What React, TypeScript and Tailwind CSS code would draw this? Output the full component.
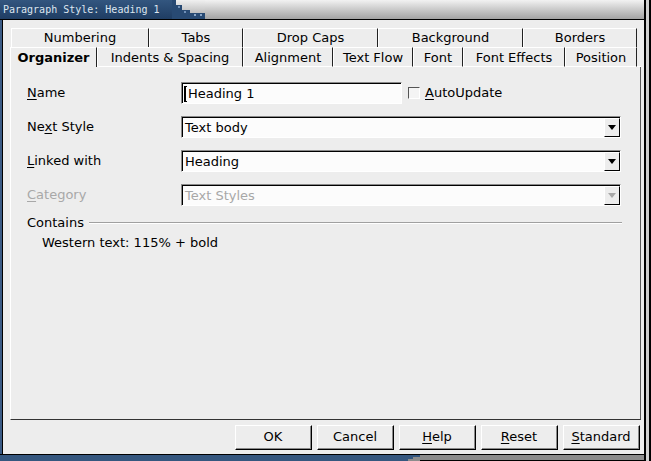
import React from 'react';

const backTabs = [
  { label: 'Numbering', w: 'w-[138px]' },
  { label: 'Tabs', w: 'w-[94px]' },
  { label: 'Drop Caps', w: 'w-[135px]' },
  { label: 'Background', w: 'w-[145px]' },
  { label: 'Borders', w: 'w-[114px]' },
];

const frontTabs = [
  { label: 'Organizer', w: 'w-[87px]', active: true },
  { label: 'Indents & Spacing', w: 'w-[146px]' },
  { label: 'Alignment', w: 'w-[90px]' },
  { label: 'Text Flow', w: 'w-[80px]' },
  { label: 'Font', w: 'w-[50px]' },
  { label: 'Font Effects', w: 'w-[102px]' },
  { label: 'Position', w: 'w-[72px]' },
];

const U = ({ children }: { children: React.ReactNode }) => (
  <span className="underline decoration-1 underline-offset-[2px]">{children}</span>
);

const Arrow = ({ disabled }: { disabled?: boolean }) => (
  <svg width="8" height="5" viewBox="0 0 8 5">
    <polygon points="0,0 8,0 4,5" fill={disabled ? '#a8a8a8' : '#000'} />
  </svg>
);

// sunken field, motif style
const Sunken = ({ className, children }: { className: string; children: React.ReactNode }) => (
  <div className={`${className} h-[22px] flex border border-t-[#8a8a8a] border-l-[#8a8a8a] border-b-white border-r-white`}>
    <div className="flex-1 flex items-stretch border-t border-l border-t-black border-l-black bg-[#fcfcfc]">
      {children}
    </div>
  </div>
);

const Combo = ({ value, disabled }: { value: string; disabled?: boolean }) => (
  <Sunken className="w-[440px]">
    <div className={`flex-1 flex items-center pl-[2px] ${disabled ? 'text-[#a8a8a8]' : 'text-black'}`}>{value}</div>
    <div className="w-[16px] flex items-center justify-center bg-[#ededed] border-t border-l border-t-white border-l-white border-b border-r border-b-black border-r-black">
      <Arrow disabled={disabled} />
    </div>
  </Sunken>
);

const Btn = ({ children }: { children: React.ReactNode }) => (
  <div className="w-[77px] h-[25px] flex border-t border-l border-t-white border-l-white border-b border-r border-b-black border-r-black">
    <div className="flex-1 flex items-center justify-center border-b border-r border-b-[#8a8a8a] border-r-[#8a8a8a] bg-[#ededed]">
      {children}
    </div>
  </div>
);

const App: React.FC = () => {
  return (
    <div
      className="w-[651px] h-[461px] flex bg-[#ededed] text-[13px] text-black overflow-hidden"
      style={{ fontFamily: '"DejaVu Sans", "Liberation Sans", sans-serif' }}
    >
      <div className="w-[644px] flex flex-col">
        {/* Title bar */}
        <div className="h-[19px] flex">
          <div
            className="w-[172px] flex items-center pl-[3px] bg-gradient-to-b from-[#33567f] to-[#1f3d63] text-[#dde6f0] text-[10px]"
            style={{ fontFamily: '"DejaVu Sans Mono", "Liberation Mono", monospace' }}
          >
            Paragraph Style: Heading 1
          </div>
          <svg width="33" height="19" viewBox="0 0 33 19" className="bg-gradient-to-b from-[#f0f0f0] to-[#a8a8a8]">
            <polygon points="0,0 4,0 4,5 10,5 10,10 18,10 18,13 33,13 33,19 0,19" fill="#284a73" />
            <rect x="6" y="6" width="2" height="2" fill="#6f90b8" />
            <rect x="12" y="11" width="2" height="2" fill="#6f90b8" />
            <rect x="22" y="14" width="2" height="2" fill="#8aa6c8" />
            <rect x="28" y="14" width="2" height="2" fill="#8aa6c8" />
          </svg>
          <div className="flex-1 bg-gradient-to-b from-[#f2f2f2] to-[#a3a3a3]" />
        </div>
        <div className="h-px bg-black" />

        {/* Window body */}
        <div className="flex-1 flex">
          <div className="w-[2px] bg-[#3b5b85]" />
          <div className="w-px bg-black" />
          <div className="flex-1 flex flex-col pt-[8px] pl-[7px] pr-[3px] pb-[4px]">
            {/* Tabs */}
            <div className="h-[19px] flex ml-px">
              {backTabs.map((t) => (
                <div
                  key={t.label}
                  className={`${t.w} flex items-center justify-center border-t border-l border-t-white border-l-white border-r border-r-[#222]`}
                >
                  {t.label}
                </div>
              ))}
            </div>
            <div className="h-[20px] flex">
              {frontTabs.map((t) =>
                t.active ? (
                  <div
                    key={t.label}
                    className={`${t.w} flex items-center justify-center pt-px font-bold border-t border-l border-t-white border-l-white border-r border-r-[#222]`}
                  >
                    {t.label}
                  </div>
                ) : (
                  <div
                    key={t.label}
                    className={`${t.w} flex items-center justify-center pt-px border-t border-l border-b border-t-white border-l-white border-b-white border-r border-r-[#222]`}
                  >
                    {t.label}
                  </div>
                )
              )}
              <div className="flex-1 border-b border-b-white" />
            </div>

            {/* Panel */}
            <div className="flex-1 flex flex-col border-l border-l-white border-r border-r-[#5a5a5a] border-b border-b-[#333] pl-[16px] pr-[18px] pt-[15px]">
              <div className="flex flex-col gap-[12px]">
                <div className="flex items-center h-[22px]">
                  <div className="w-[154px]">
                    <U>N</U>ame
                  </div>
                  <Sunken className="w-[221px]">
                    <div className="flex items-center pl-[1px]">
                      <div className="w-[3px] h-[16px] border-l-2 border-t border-b border-black mr-px" />
                      <span>Heading 1</span>
                    </div>
                  </Sunken>
                  <div className="ml-[6px] w-[12px] h-[12px] border border-t-[#555] border-l-[#555] border-b-white border-r-white bg-[#f4f4f4]" />
                  <div className="ml-[5px]">
                    <U>A</U>utoUpdate
                  </div>
                </div>
                <div className="flex items-center h-[22px]">
                  <div className="w-[154px]">
                    Ne<U>x</U>t Style
                  </div>
                  <Combo value="Text body" />
                </div>
                <div className="flex items-center h-[22px]">
                  <div className="w-[154px]">
                    <U>L</U>inked with
                  </div>
                  <Combo value="Heading" />
                </div>
                <div className="flex items-center h-[22px]">
                  <div className="w-[154px] text-[#a8a8a8]">
                    <U>C</U>ategory
                  </div>
                  <Combo value="Text Styles" disabled />
                </div>
              </div>

              <div className="flex items-center mt-[9px] h-[16px]">
                <span>Contains</span>
                <div className="flex-1 ml-[5px] border-t border-t-[#a0a0a0] border-b border-b-white" />
              </div>
              <div className="pl-[15px] mt-[4px] h-[16px] flex items-center">Western text: 115% + bold</div>
            </div>

            {/* Buttons */}
            <div className="mt-[5px] flex justify-end gap-[5px] pr-px">
              <Btn>OK</Btn>
              <Btn>Cancel</Btn>
              <Btn>
                <span>
                  <U>H</U>elp
                </span>
              </Btn>
              <Btn>
                <span>
                  <U>R</U>eset
                </span>
              </Btn>
              <Btn>
                <span>
                  <U>S</U>tandard
                </span>
              </Btn>
            </div>
          </div>
        </div>
        <div className="h-px bg-black" />
        {/* bottom handle */}
        <div className="h-[6px] flex">
          <div className="w-[405px] bg-[#35577f]" />
          <svg width="15" height="6" viewBox="0 0 15 6">
            <rect width="15" height="6" fill="#8c8c8c" />
            <polygon points="0,0 15,0 15,2 8,2 8,4 3,4 3,6 0,6" fill="#35577f" />
          </svg>
          <div className="flex-1 bg-[#8c8c8c] border-b border-b-black" />
        </div>
      </div>

      {/* right frame */}
      <div className="w-[7px] flex border-l-2 border-l-black border-r-2 border-r-black bg-[#cfcfcf]" />
    </div>
  );
};

export default App;
